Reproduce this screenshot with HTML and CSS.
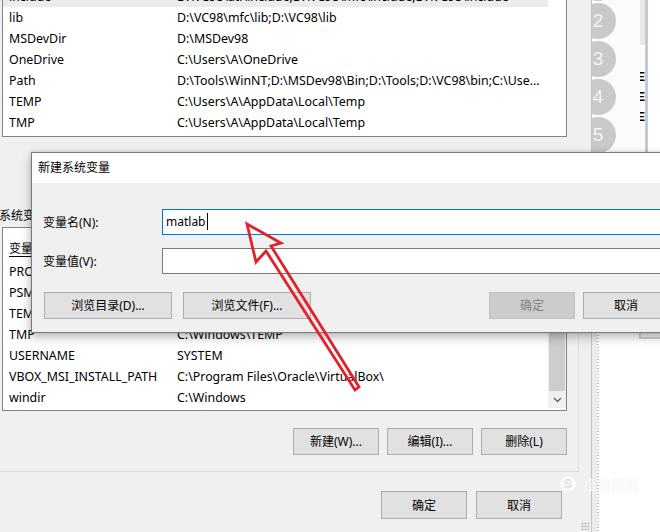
FILE: index.html
```html
<!DOCTYPE html>
<html lang="zh-CN">
<head>
<meta charset="utf-8">
<title>新建系统变量</title>
<link rel="stylesheet" href="styles.css">
</head>
<body>
<div class="screen">
  <div class="env">
    <div class="list top-list">
      <div class="rows">
        <div class="row sel"><span class="c1">include</span><span class="c2">D:\VC98\atl\include;D:\VC98\mfc\include;D:\VC98\include</span></div>
        <div class="row"><span class="c1">lib</span><span class="c2">D:\VC98\mfc\lib;D:\VC98\lib</span></div>
        <div class="row"><span class="c1">MSDevDir</span><span class="c2">D:\MSDev98</span></div>
        <div class="row"><span class="c1">OneDrive</span><span class="c2">C:\Users\A\OneDrive</span></div>
        <div class="row"><span class="c1">Path</span><span class="c2">D:\Tools\WinNT;D:\MSDev98\Bin;D:\Tools;D:\VC98\bin;C:\Use...</span></div>
        <div class="row"><span class="c1">TEMP</span><span class="c2">C:\Users\A\AppData\Local\Temp</span></div>
        <div class="row"><span class="c1">TMP</span><span class="c2">C:\Users\A\AppData\Local\Temp</span></div>
      </div>
      <div class="vscroll blank"></div>
    </div>

    <div class="sys-group">
      <div class="group-label">系统变量(S)</div>
      <div class="list sys-list">
        <div class="rows">
          <div class="row head"><span class="c1"><u>变量</u></span><span class="c2">值</span></div>
          <div class="row"><span class="c1">PROCESSOR_REVISION</span><span class="c2">9e09</span></div>
          <div class="row"><span class="c1">PSModulePath</span><span class="c2">%ProgramFiles%\WindowsPowerShell\Modules</span></div>
          <div class="row"><span class="c1">TEMP</span><span class="c2">C:\Windows\TEMP</span></div>
          <div class="row"><span class="c1">TMP</span><span class="c2">C:\Windows\TEMP</span></div>
          <div class="row"><span class="c1">USERNAME</span><span class="c2">SYSTEM</span></div>
          <div class="row"><span class="c1">VBOX_MSI_INSTALL_PATH</span><span class="c2">C:\Program Files\Oracle\VirtualBox\</span></div>
          <div class="row"><span class="c1">windir</span><span class="c2">C:\Windows</span></div>
        </div>
        <div class="vscroll">
          <div class="track"><div class="thumb"></div></div>
          <div class="arrow-down"><svg width="9" height="6" viewBox="0 0 9 6"><path d="M1 1 L4.5 4.5 L8 1" fill="none" stroke="#606060" stroke-width="1.3"/></svg></div>
        </div>
      </div>
      <div class="btn-row">
        <button class="btn">新建(W)...</button>
        <button class="btn">编辑(I)...</button>
        <button class="btn">删除(L)</button>
      </div>
    </div>

    <div class="footer">
      <button class="btn">确定</button>
      <button class="btn">取消</button>
    </div>
    <div class="grip"></div>
  </div>

  <div class="backdrop">
    <div class="bd-top">
      <div class="circles">
        <div class="circle">1</div>
        <div class="circle">2</div>
        <div class="circle">3</div>
        <div class="circle">4</div>
        <div class="circle">5</div>
      </div>
      <div class="bd-gap"></div>
      <div class="bd-letters"><span>E</span><span>E</span><span>E</span></div>
      <div class="bd-line"></div>
      <div class="bd-white"></div>
    </div>
    <div class="bd-bottom">
      <div class="bd-edge"></div>
      <div class="bd-dots"></div>
      <div class="bd-canvas">
        <div class="bd-tab"></div>
        <div class="mini-dialog">
          <div class="mini-title">编</div>
          <div class="mini-line">变</div>
          <div class="mini-line">变</div>
          <div class="mini-btn"></div>
        </div>
      </div>
    </div>
  </div>

  <div class="dialog">
    <div class="dlg-title">新建系统变量</div>
    <div class="dlg-body">
      <div class="field">
        <label class="field-label">变量名(N):</label>
        <div class="input focus"><span class="caret">matlab</span></div>
      </div>
      <div class="field">
        <label class="field-label">变量值(V):</label>
        <div class="input"></div>
      </div>
      <div class="dlg-buttons">
        <button class="btn wide">浏览目录(D)...</button>
        <button class="btn wide">浏览文件(F)...</button>
        <div class="spacer"></div>
        <button class="btn disabled">确定</button>
        <button class="btn">取消</button>
      </div>
    </div>
  </div>

  <div class="watermark">
    <span class="wm-logo">S</span><span class="wm-text">搜狗指南</span>
  </div>

  <svg class="arrow" width="660" height="532" viewBox="0 0 660 532">
    <polygon points="247,224 281,243 271,246 359,387 355,390 266,251 256,262" fill="none" stroke="#e2222a" stroke-width="2.8" stroke-linejoin="miter"/>
  </svg>
</div>
</body>
</html>
```
FILE: styles.css
```css
* { box-sizing: border-box; }
html, body { margin: 0; padding: 0; }
body {
  width: 660px;
  height: 532px;
  overflow: hidden;
  background: #ffffff;
  font-family: "Noto Sans", "Noto Sans CJK SC", sans-serif;
  font-size: 12px;
  color: #000;
}
.screen {
  position: relative;
  width: 660px;
  height: 532px;
  display: flex;
  overflow: hidden;
}

/* ---------- environment variables window ---------- */
.env {
  width: 592px;
  height: 532px;
  flex: none;
  background: #f0f0f0;
  border-right: 1px solid #c4c4c4;
  display: flex;
  flex-direction: column;
  position: relative;
}
.list {
  display: flex;
  background: #fff;
  border: 1px solid #828282;
  width: 565px;
  margin-left: 2px;
}
.rows { flex: 1; min-width: 0; }
.row {
  display: flex;
  height: 21px;
  line-height: 22px;
  padding-left: 6px;
  white-space: nowrap;
  overflow: hidden;
  font-size: 12.4px;
}
.row.sel { background: #ececec; }
.c1 { width: 168px; flex: none; overflow: hidden; }
.c2 { flex: 1; overflow: hidden; }
.vscroll {
  width: 18px;
  flex: none;
  display: flex;
  flex-direction: column;
}
.top-list {
  margin-top: -15px;
  padding-bottom: 3px;
}
.sys-group {
  margin-top: 71px;
  margin-left: -10px;
  width: 589px;
  padding-right: 11px;
  padding-bottom: 16px;
  border-right: 1px solid #dcdcdc;
  border-bottom: 1px solid #dcdcdc;
}
.group-label {
  height: 16px;
  line-height: 16px;
  padding-left: 9px;
}
.sys-list {
  margin-top: 3px;
  margin-left: 12px;
  padding-bottom: 2px;
}
.row.head {
  height: 33px;
  line-height: 22px;
  padding-top: 10px;
  font-size: 12px;
}
.row.head u { text-decoration-thickness: 1px; text-underline-offset: 3px; }
.sys-list .vscroll { background: #f0f0f0; }
.track {
  flex: 1;
  display: flex;
  flex-direction: column;
  justify-content: flex-end;
  padding: 0 1px;
}
.thumb {
  height: 92px;
  background: #cdcdcd;
}
.arrow-down {
  height: 17px;
  display: flex;
  align-items: center;
  justify-content: center;
}
.btn-row {
  margin-top: 17px;
  display: flex;
  justify-content: flex-end;
  gap: 8px;
}
.btn {
  font: inherit;
  color: #000;
  background: #e1e1e1;
  border: 1px solid #adadad;
  border-radius: 0;
  width: 86px;
  height: 27px;
  padding: 0;
  line-height: 25px;
}
.footer {
  margin-top: 19px;
  display: flex;
  justify-content: flex-end;
  gap: 9px;
  padding-right: 29px;
}
.footer .btn { height: 28px; }
.grip {
  position: absolute;
  right: 2px;
  bottom: 2px;
  width: 8px;
  height: 8px;
  background-image: radial-gradient(circle, #b0b0b0 0.8px, transparent 1.2px);
  background-size: 3px 3px;
}

/* ---------- background page to the right ---------- */
.backdrop {
  flex: 1;
  display: flex;
  flex-direction: column;
  overflow: hidden;
  background: #fff;
}
.bd-top {
  height: 152px;
  display: flex;
  flex: none;
  background: #fbfbfb;
}
.circles {
  width: 25px;
  flex: none;
  display: flex;
  flex-direction: column;
  gap: 2px;
  margin-top: -35px;
  overflow: visible;
}
.circle {
  width: 36px;
  height: 36px;
  flex: none;
  margin-left: -12px;
  border-radius: 50%;
  background: #c9c9c9;
  color: #f4f4f4;
  font-size: 19px;
  line-height: 36px;
  text-align: center;
  font-family: "Liberation Sans", sans-serif;
}
.bd-gap { width: 23px; flex: none; }
.bd-letters {
  width: 5px;
  flex: none;
  overflow: hidden;
  display: flex;
  flex-direction: column;
  padding-top: 67px;
  font-size: 12px;
  font-weight: bold;
  line-height: 20px;
  font-family: "Liberation Sans", sans-serif;
  background: linear-gradient(#e8e8e8 0 45px, #fbfbfb 45px);
}
.bd-letters span { margin-left: -3px; }
.bd-line {
  width: 3px;
  flex: none;
  background: #c3cad6;
}
.bd-white { flex: 1; background: #fff; }
.bd-bottom {
  flex: 1;
  display: flex;
}
.bd-edge { width: 5px; flex: none; background: #ececec; }
.bd-dots {
  width: 2px;
  flex: none;
  background-image: linear-gradient(#bdbdbd 50%, transparent 50%);
  background-size: 2px 3px;
}
.bd-canvas {
  flex: 1;
  background: #fff;
  padding-left: 40px;
  display: flex;
  flex-direction: column;
}
.bd-tab {
  height: 14px;
  margin-left: -2px;
  background: #e2e2e2;
  border: 1px solid #c8c8c8;
  border-top: none;
  border-bottom-left-radius: 4px;
}
.mini-dialog {
  margin-top: 21px;
  height: 152px;
  background: #f0f0f0;
  border: 2px solid #c9cfdb;
  border-right: none;
  padding-left: 8px;
  display: flex;
  flex-direction: column;
  color: #333;
  font-size: 11px;
  overflow: hidden;
}
.mini-title { height: 28px; line-height: 28px; margin-left: -1px; }
.mini-line { height: 30px; line-height: 30px; margin-left: 1px; }
.mini-btn {
  margin-top: 8px;
  height: 34px;
  margin-left: 6px;
  border: 1px solid #b8b8b8;
  border-right: none;
  background: #e8e8e8;
}

/* ---------- the new-variable dialog ---------- */
.dialog {
  position: absolute;
  left: 31px;
  top: 152px;
  width: 680px;
  height: 181px;
  border: 1px solid #7a7a7a;
  border-right: none;
  background: #f0f0f0;
  box-shadow: 0 4px 10px rgba(0, 0, 0, 0.28), 0 0 4px rgba(0, 0, 0, 0.12);
  display: flex;
  flex-direction: column;
}
.dlg-title {
  height: 30px;
  line-height: 30px;
  background: #fff;
  padding-left: 6px;
  flex: none;
}
.dlg-body {
  flex: 1;
  padding: 26px 0 0 11px;
  display: flex;
  flex-direction: column;
  gap: 13px;
}
.field {
  display: flex;
  align-items: center;
}
.field-label { width: 119px; flex: none; }
.input {
  flex: 1;
  height: 26px;
  background: #fff;
  border: 1px solid #7a7a7a;
  border-right: none;
  padding-left: 3px;
  line-height: 23px;
}
.input.focus { border-color: #0078d7; }
.caret {
  border-right: 1px solid #000;
  padding-right: 1px;
}
.dlg-buttons {
  margin-top: 5px;
  display: flex;
  gap: 11px;
  padding-left: 1px;
}
.btn.wide { width: 128px; }
.spacer { width: 156px; flex: none; }
.dlg-buttons .btn.disabled {
  background: #cccccc;
  border-color: #bfbfbf;
  color: #838383;
}
.dlg-buttons .btn.disabled + .btn { margin-left: -3px; }

/* ---------- overlays ---------- */
.watermark {
  position: absolute;
  left: 560px;
  top: 474px;
  display: flex;
  align-items: center;
  gap: 7px;
  color: rgba(255, 255, 255, 0.75);
  text-shadow: 0 0 1px rgba(0, 0, 0, 0.08);
  pointer-events: none;
}
.wm-logo {
  width: 16px;
  height: 16px;
  border-radius: 50%;
  background: rgba(255, 255, 255, 0.7);
  color: #e4e4e4;
  font: bold 12px/16px "Liberation Sans", sans-serif;
  text-align: center;
}
.wm-text { font-size: 14px; font-weight: bold; }
.arrow {
  position: absolute;
  left: 0;
  top: 0;
  pointer-events: none;
}
```
